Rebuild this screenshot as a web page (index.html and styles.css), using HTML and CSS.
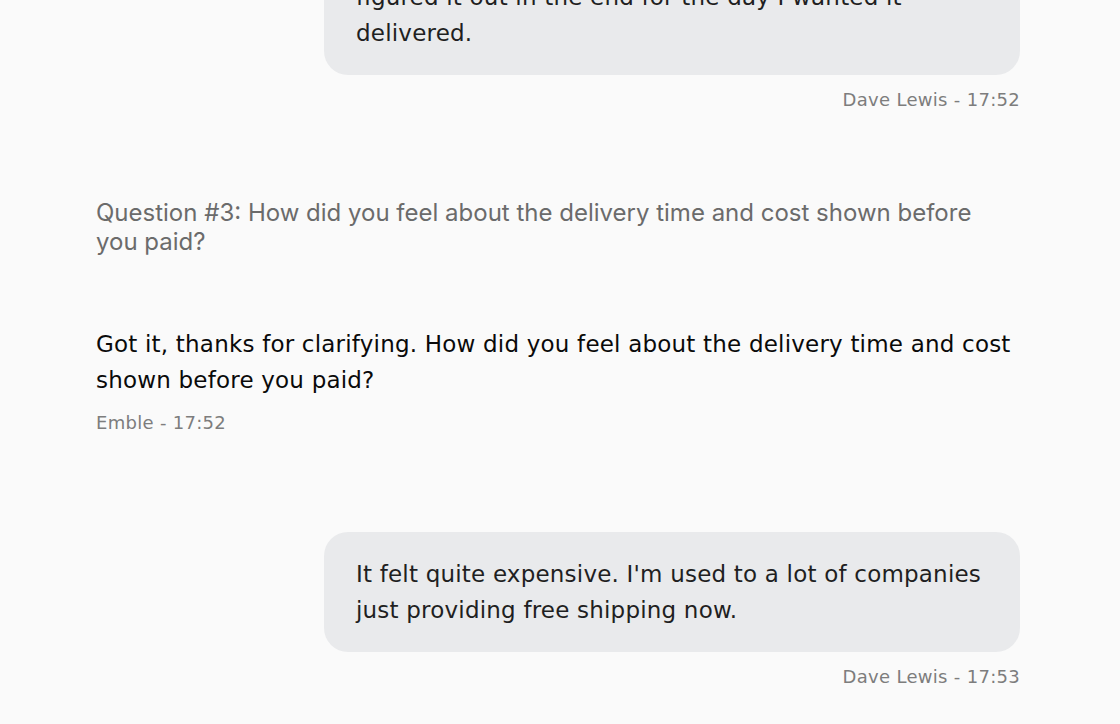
FILE: index.html
```html
<!DOCTYPE html>
<html lang="en">
<head>
<meta charset="utf-8">
<title>Interview transcript</title>
<link rel="stylesheet" href="styles.css">
</head>
<body>
<main class="transcript">
  <div class="msg msg-user msg-first">
    <div class="bubble">It took me a while to find the date picker, but I<br>figured it out in the end for the day I wanted it<br>delivered.</div>
    <div class="meta">Dave Lewis - 17:52</div>
  </div>

  <div class="question">Question #3: How did you feel about the delivery time and cost shown before<br>you paid?</div>

  <div class="msg msg-bot">
    <div class="bot-text">Got it, thanks for clarifying. How did you feel about the delivery time and cost<br>shown before you paid?</div>
    <div class="meta">Emble - 17:52</div>
  </div>

  <div class="msg msg-user msg-last">
    <div class="bubble">It felt quite expensive. I'm used to a lot of companies<br>just providing free shipping now.</div>
    <div class="meta">Dave Lewis - 17:53</div>
  </div>
</main>
</body>
</html>
```

FILE: styles.css
```css
html, body {
  margin: 0;
  padding: 0;
  background: #fafafa;
  height: 100%;
  overflow: hidden;
}

.transcript {
  display: flex;
  flex-direction: column;
  padding: 0 100px 0 96px;
  font-family: "DejaVu Sans", "Liberation Sans", sans-serif;
}

.msg {
  display: flex;
  flex-direction: column;
}

.msg-user {
  align-items: flex-end;
}

.msg-first {
  margin-top: -81px;
}

.bubble {
  background: #e9eaec;
  border-radius: 24px;
  padding: 24px 32px;
  width: 696px;
  box-sizing: border-box;
  font-size: 23px;
  letter-spacing: 0.2px;
  line-height: 36px;
  color: #1f1f22;
  white-space: nowrap;
}

.meta {
  margin-top: 13px;
  font-size: 18px;
  letter-spacing: 0.3px;
  line-height: 24px;
  color: #7d7d7d;
}

.question {
  margin-top: 86px;
  font-family: "Inter", "Liberation Sans", sans-serif;
  font-size: 24px;
  line-height: 29px;
  color: #6b6b6b;
  white-space: nowrap;
}

.msg-bot {
  margin-top: 70px;
}

.bot-text {
  font-size: 23px;
  letter-spacing: 0.2px;
  line-height: 36px;
  color: #0a0a0a;
  white-space: nowrap;
}

.msg-last {
  margin-top: 97px;
}
```
